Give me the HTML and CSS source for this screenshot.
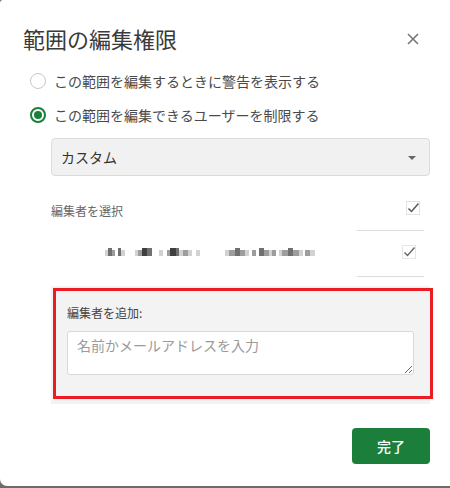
FILE: index.html
```html
<!DOCTYPE html>
<html lang="ja">
<head>
<meta charset="utf-8">
<link rel="stylesheet" href="styles.css">
</head>
<body>
<div class="dialog">
  <div class="header">
    <h1 class="title">範囲の編集権限</h1>
    <svg class="close" width="14" height="14" viewBox="0 0 14 14"><path d="M2 2 L12 12 M12 2 L2 12" stroke="#777" stroke-width="1.6" fill="none"/></svg>
  </div>
  <div class="radios">
    <label class="radio-row"><span class="radio"></span><span>この範囲を編集するときに警告を表示する</span></label>
    <label class="radio-row"><span class="radio checked"></span><span>この範囲を編集できるユーザーを制限する</span></label>
  </div>
  <div class="select"><span>カスタム</span><span class="caret"></span></div>
  <div class="editors">
    <div class="editor-row first">
      <span class="editor-label">編集者を選択</span>
      <span class="check-cell"><svg class="check" width="14" height="14" viewBox="0 0 14 14"><rect x="0.5" y="0.5" width="13" height="13" fill="none" stroke="#e2e2e2"/><path d="M2.5 7.5 L5.5 10.5 L12.5 2.5" stroke="#5a5a5a" stroke-width="1.5" fill="none"/></svg></span>
    </div>
    <div class="editor-row second">
      <span class="blur">
        <i class="b1" style="width:3px"></i><i class="b3" style="width:4px"></i><i class="b2" style="width:3px"></i><i class="sp" style="width:3px"></i><i class="b3" style="width:3px"></i><i class="b1" style="width:4px"></i>
        <i class="sp" style="width:10px"></i>
        <i class="b1" style="width:3px"></i><i class="b2" style="width:4px"></i><i class="b4" style="width:5px"></i><i class="b3" style="width:5px"></i>
        <i class="sp" style="width:7px"></i>
        <i class="b1" style="width:4px"></i><i class="sp" style="width:4px"></i><i class="b2" style="width:3px"></i><i class="b4" style="width:6px"></i><i class="b3" style="width:3px"></i><i class="b1" style="width:4px"></i><i class="b2" style="width:5px"></i><i class="b1" style="width:4px"></i><i class="sp" style="width:4px"></i><i class="b1" style="width:4px"></i>
        <i class="sp" style="width:25px"></i>
        <i class="b1" style="width:4px"></i><i class="b2" style="width:6px"></i><i class="b3" style="width:5px"></i><i class="b2" style="width:5px"></i><i class="b1" style="width:4px"></i><i class="sp" style="width:3px"></i><i class="b2" style="width:4px"></i><i class="sp" style="width:3px"></i><i class="b3" style="width:5px"></i><i class="b2" style="width:5px"></i><i class="b1" style="width:3px"></i><i class="b2" style="width:4px"></i><i class="sp" style="width:3px"></i><i class="b1" style="width:3px"></i><i class="b2" style="width:6px"></i><i class="b3" style="width:5px"></i><i class="b2" style="width:6px"></i><i class="b1" style="width:4px"></i><i class="sp" style="width:2px"></i><i class="b2" style="width:5px"></i><i class="b1" style="width:5px"></i>
      </span>
      <span class="check-cell"><svg class="check" width="14" height="14" viewBox="0 0 14 14"><rect x="0.5" y="0.5" width="13" height="13" fill="none" stroke="#e6e6e6"/><path d="M2.5 7.5 L5.5 10.5 L12.5 2.5" stroke="#666" stroke-width="1.4" fill="none"/></svg></span>
    </div>
  </div>
  <div class="add-panel">
    <div class="add-label">編集者を追加:</div>
    <textarea class="add-input" placeholder="名前かメールアドレスを入力"></textarea>
  </div>
  <div class="footer">
    <button class="done">完了</button>
  </div>
</div>
</body>
</html>
```
FILE: styles.css
```css
*, *::before, *::after { box-sizing: border-box; }
html, body { margin: 0; padding: 0; }
body {
  background: #6b6b6b;
  width: 450px;
  height: 488px;
  font-family: "Noto Sans CJK JP", "Noto Sans", sans-serif;
  color: #333;
}
.dialog {
  background: #fff;
  width: 450px;
  height: 486px;
  border-radius: 3px 0 0 7px;
  position: relative;
  overflow: hidden;
}
.header {
  display: flex;
  align-items: center;
  justify-content: space-between;
  padding: 22px 30px 0 23px;
  height: 54px;
}
.title {
  margin: 0;
  font-size: 22px;
  font-weight: 400;
  line-height: 32px;
  color: #3a3a3a;
}
.close { margin-top: 2px; }
.radios {
  padding: 10px 0 0 30px;
}
.radio-row {
  display: flex;
  align-items: center;
  height: 34px;
  font-size: 14px;
  color: #4a4a4a;
  gap: 8px;
}
.radio {
  width: 16px;
  height: 16px;
  border-radius: 50%;
  border: 1px solid #c8c8c8;
  background: #fff;
  flex: none;
}
.radio.checked {
  border: 2px solid #188038;
  position: relative;
}
.radio.checked::after {
  content: "";
  position: absolute;
  left: 2px;
  top: 2px;
  width: 8px;
  height: 8px;
  border-radius: 50%;
  background: #188038;
}
.select {
  margin: 6px 0 0 51px;
  width: 379px;
  height: 38px;
  background: #f1f1f1;
  border: 1px solid #dcdcdc;
  border-radius: 4px;
  display: flex;
  align-items: center;
  justify-content: space-between;
  padding: 0 13px 0 9px;
  font-size: 14px;
  color: #333;
}
.caret {
  width: 0;
  height: 0;
  border-left: 4px solid transparent;
  border-right: 4px solid transparent;
  border-top: 4px solid #666;
  margin-top: 2px;
}
.editors {
  margin: 14px 0 0 51px;
  width: 373px;
}
.editor-row {
  display: flex;
  align-items: stretch;
  justify-content: space-between;
}
.editor-row.first { height: 41px; }
.editor-row.second { height: 46px; }
.editor-label {
  font-size: 12px;
  color: #666;
  align-self: center;
}
.check-cell {
  width: 67px;
  border-bottom: 1px solid #dcdcdc;
  display: flex;
  align-items: center;
  justify-content: flex-end;
  padding-right: 4px;
}
.first .check-cell { padding-bottom: 4px; }
.second .check-cell { padding-right: 8px; padding-bottom: 4px; }
.blur {
  display: flex;
  align-items: center;
  margin-left: 54px;
  padding-bottom: 4px;
}
.blur i {
  display: block;
  height: 4px;
}
.blur .b1 { background: #d2d2d2; height: 6px; margin-top: 2px; }
.blur .b2 { background: #9d9d9d; height: 6px; margin-top: 2px; }
.blur .b3 { background: #707070; height: 8px; }
.blur .b4 { background: #3f3f3f; height: 8px; }
.blur .sp { background: transparent; }
.add-panel {
  margin: 9px 0 0 51px;
  width: 379px;
  height: 118px;
  background: #f3f3f3;
  padding: 18px 16px 0 16px;
  position: relative;
}
.add-panel::after {
  content: "";
  position: absolute;
  left: 2px;
  top: 2px;
  width: 380px;
  height: 111px;
  border: 3px solid #ec1c24;
}
.add-label {
  font-size: 12px;
  color: #444;
  line-height: 18px;
}
.add-input {
  display: block;
  margin-top: 9px;
  width: 347px;
  height: 44px;
  border: 1px solid #d9d9d9;
  border-radius: 3px;
  background: #fff;
  font-family: "Noto Sans CJK JP", "Noto Sans", sans-serif;
  font-size: 14px;
  padding: 3px 9px;
  resize: vertical;
  color: #333;
}
.add-input::placeholder { color: #9a9a9a; }
.footer {
  display: flex;
  justify-content: flex-end;
  padding: 24px 20px 0 0;
}
.done {
  width: 78px;
  height: 36px;
  background: #1b7f3b;
  color: #fff;
  border: none;
  border-radius: 4px;
  font-family: "Noto Sans CJK JP", "Noto Sans", sans-serif;
  font-size: 14px;
  font-weight: 500;
}
```
